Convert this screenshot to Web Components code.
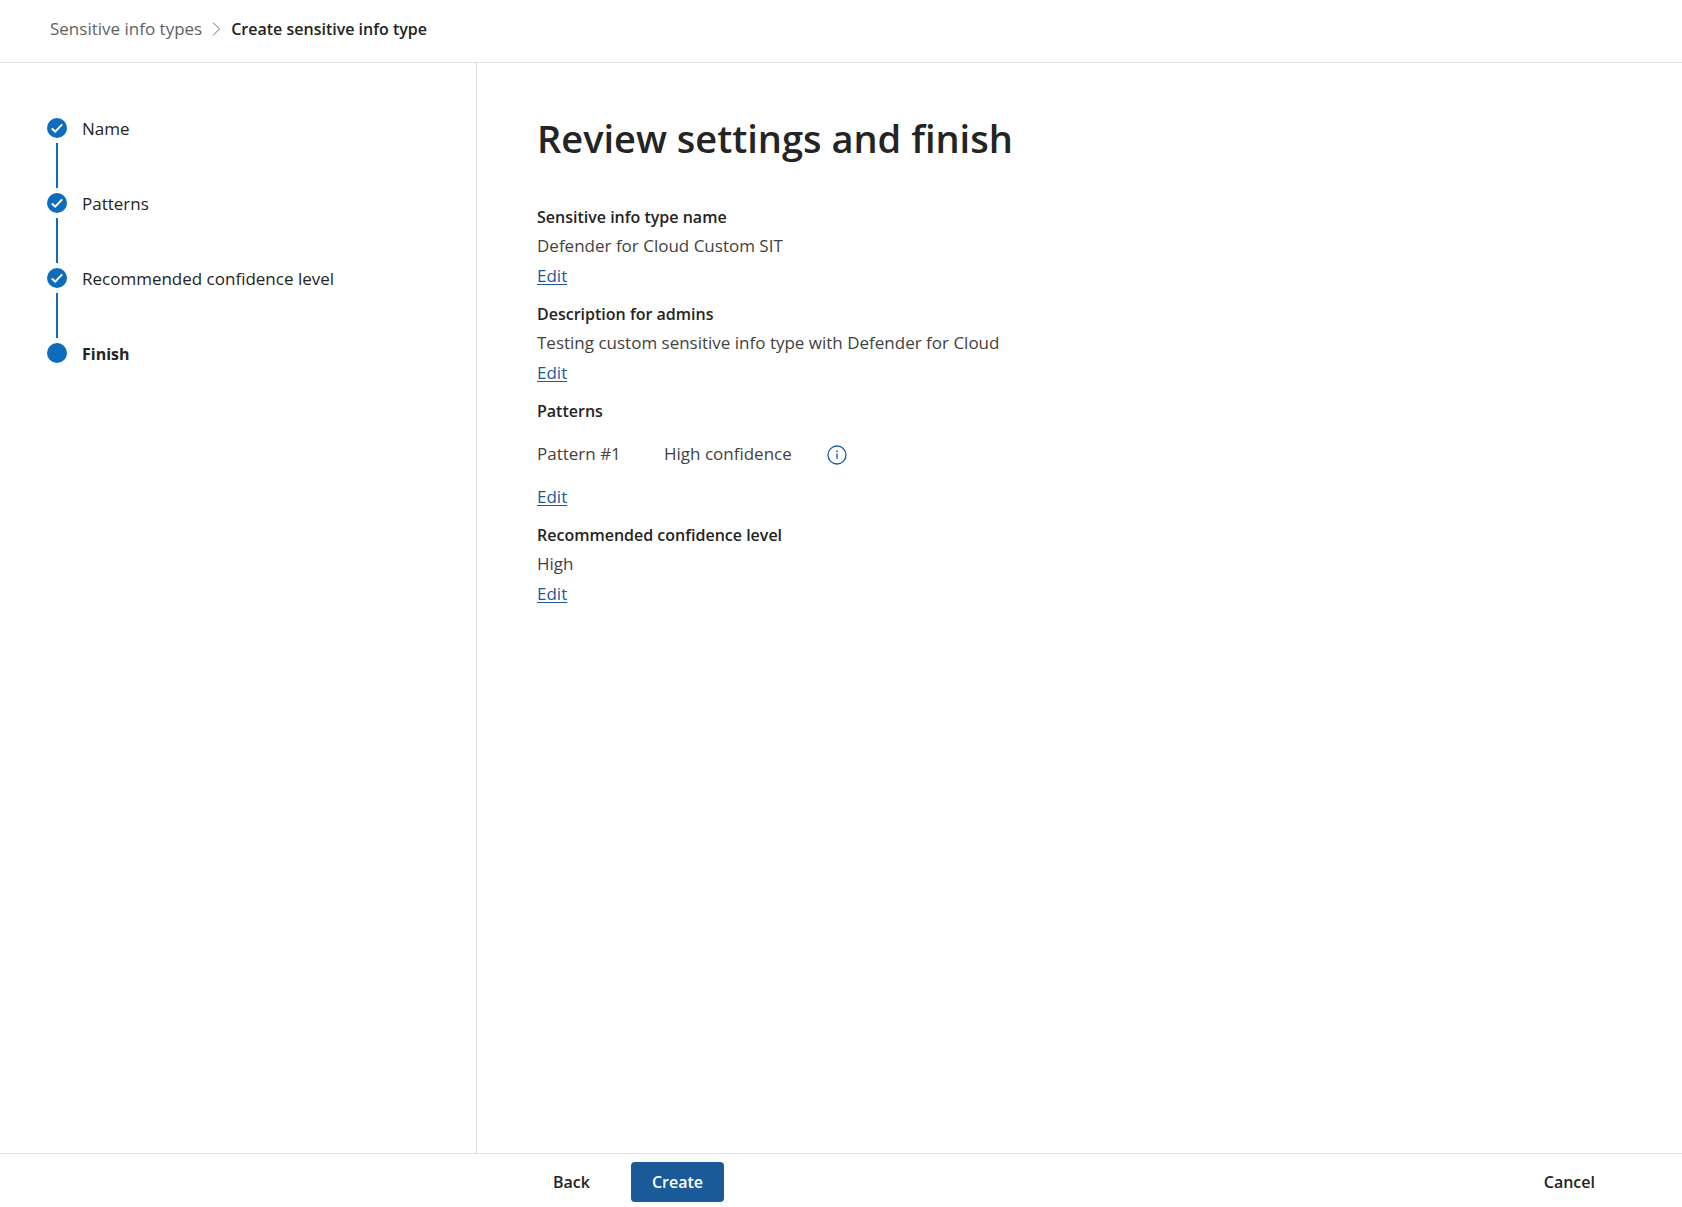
<!DOCTYPE html>
<html lang="en">
<head>
<meta charset="utf-8">
<meta name="viewport" content="width=device-width, initial-scale=1">
<title>Create sensitive info type</title>
<style>
html, body { height: 100%; margin: 0; }
body {
  --ink: #242424;
  --ink-soft: #424242;
  --line: #e0e0e0;
  --step: #0f6cbd;
  --brand: #1b5a99;
  --strong-size: 16px;
  font: 400 17px/24px "Segoe UI", "Open Sans", "Noto Sans", sans-serif;
  color: var(--ink);
  background: #fff;
}
</style>
</head>
<body>
<wizard-page>
  <crumb-trail slot="header"></crumb-trail>
  <step-list slot="steps">
    <step-item state="done">Name</step-item>
    <step-item state="done">Patterns</step-item>
    <step-item state="done">Recommended confidence level</step-item>
    <step-item state="current">Finish</step-item>
  </step-list>
  <review-panel heading="Review settings and finish">
    <review-field label="Sensitive info type name">Defender for Cloud Custom SIT</review-field>
    <review-field label="Description for admins">Testing custom sensitive info type with Defender for Cloud</review-field>
    <review-field label="Patterns"><pattern-row name="Pattern #1">High confidence</pattern-row></review-field>
    <review-field label="Recommended confidence level">High</review-field>
  </review-panel>
  <wizard-footer slot="footer"></wizard-footer>
</wizard-page>

<script>
const define = (name, html, setup) => {
  const template = document.createElement('template');
  template.innerHTML = html;
  customElements.define(name, class extends HTMLElement {
    constructor() {
      super();
      this.attachShadow({ mode: 'open' }).append(template.content.cloneNode(true));
    }
    connectedCallback() {
      if (setup) setup(this, this.shadowRoot);
    }
  });
};

define('wizard-page', `
  <style>
    :host { display: flex; flex-direction: column; min-height: 100%; }
    header { border-bottom: 1px solid var(--line); }
    .body { flex: 1; display: flex; }
    aside { box-sizing: border-box; flex: 0 0 477px; padding: 55px 47px; border-right: 1px solid var(--line); }
    main { flex: 1; padding: 50px 60px; min-width: 0; }
    footer { border-top: 1px solid var(--line); }
  </style>
  <header><slot name="header"></slot></header>
  <div class="body">
    <aside><slot name="steps"></slot></aside>
    <main><slot></slot></main>
  </div>
  <footer><slot name="footer"></slot></footer>`);

define('crumb-trail', `
  <style>
    :host { display: block; padding: 17px 50px 21px; }
    nav { display: flex; align-items: center; gap: 10px; }
    a { color: #616161; text-decoration: none; }
    svg { display: block; }
    [aria-current] { font-size: var(--strong-size); font-weight: 600; }
  </style>
  <nav aria-label="Breadcrumb">
    <a href="#types">Sensitive info types</a>
    <svg width="9" height="14" viewBox="0 0 9 14" fill="none" stroke="#707070" aria-hidden="true"><path d="M1 .5 7.5 7 1 13.5"/></svg>
    <span aria-current="page">Create sensitive info type</span>
  </nav>`);

define('step-list', `
  <style>:host { display: block; }</style>
  <div role="list"><slot></slot></div>`);

define('step-item', `
  <style>
    :host { display: flex; gap: 15px; }
    .rail { display: flex; flex-direction: column; align-items: center; gap: 5px; }
    svg { display: block; }
    .link { width: 2px; height: 45px; margin-bottom: 5px; background: var(--step); }
    .label { line-height: 22px; }
    .tick { fill: none; stroke: #fff; stroke-width: 2; }
    :host([state="current"]) .label { font-size: var(--strong-size); font-weight: 700; }
    :host([state="current"]) .tick, :host([state="current"]) .link { display: none; }
  </style>
  <div class="rail">
    <svg width="20" height="20" viewBox="0 0 20 20" aria-hidden="true">
      <circle cx="10" cy="10" r="10" fill="#0f6cbd"/>
      <path class="tick" d="M4.8 10.4 8.2 13.6 15.2 6.4"/>
    </svg>
    <div class="link"></div>
  </div>
  <span class="label"><slot></slot></span>`,
  host => host.setAttribute('role', 'listitem'));

define('review-panel', `
  <style>
    :host { display: block; }
    h1 { margin: 0 0 40px; font-size: 38px; line-height: 50px; font-weight: 600; }
    .fields { display: flex; flex-direction: column; gap: 9px; }
  </style>
  <h1></h1>
  <div class="fields"><slot></slot></div>`,
  (host, root) => { root.querySelector('h1').textContent = host.getAttribute('heading'); });

define('review-field', `
  <style>
    :host { display: block; }
    h2 { margin: 0; font-size: var(--strong-size); line-height: 28px; font-weight: 600; }
    .value { line-height: 30px; color: var(--ink-soft); }
    .action { line-height: 30px; }
    a { color: var(--brand); text-decoration: underline; text-decoration-thickness: 1px; text-underline-offset: 2px; }
  </style>
  <h2></h2>
  <div class="value"><slot></slot></div>
  <div class="action"><a href="#edit">Edit</a></div>`,
  (host, root) => { root.querySelector('h2').textContent = host.getAttribute('label'); });

define('pattern-row', `
  <style>
    :host { display: flex; align-items: center; padding: 14px 0 13px; line-height: 30px; }
    .name { width: 127px; }
    .level { width: 163px; }
    button { display: flex; padding: 2px 0 0; border: 0; background: none; color: var(--brand); }
    svg { display: block; }
  </style>
  <span class="name"></span>
  <span class="level"><slot></slot></span>
  <button type="button" aria-label="Pattern details">
    <svg width="20" height="20" viewBox="0 0 20 20" aria-hidden="true">
      <circle cx="10" cy="10" r="9" fill="none" stroke="currentColor" stroke-width="1.3"/>
      <path d="M10 8.5V14" stroke="currentColor" stroke-width="1.3"/>
      <circle cx="10" cy="6.3" r=".9" fill="currentColor"/>
    </svg>
  </button>`,
  (host, root) => { root.querySelector('.name').textContent = host.getAttribute('name'); });

define('wizard-footer', `
  <style>
    :host { display: flex; align-items: center; gap: 20px; padding: 8px 66px 5px 532px; }
    button { font: inherit; font-size: var(--strong-size); font-weight: 600; height: 40px; padding: 0 21px; border: 0; border-radius: 4px; background: none; color: var(--ink); }
    .primary { background: var(--brand); color: #fff; }
    .end { margin-left: auto; }
  </style>
  <button type="button">Back</button>
  <button type="button" class="primary">Create</button>
  <button type="button" class="end">Cancel</button>`);
</script>
</body>
</html>
